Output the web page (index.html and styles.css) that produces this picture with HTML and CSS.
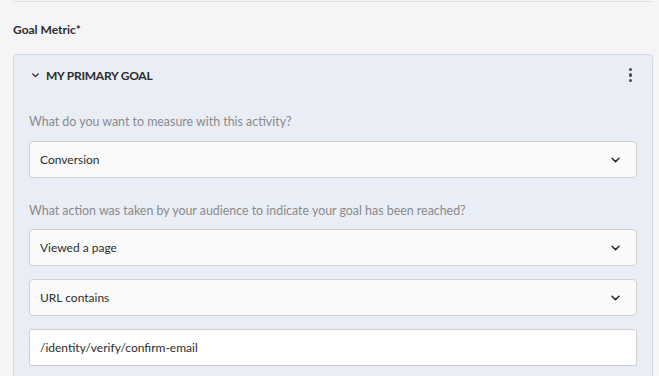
FILE: index.html
```html
<!DOCTYPE html>
<html lang="en">
<head>
<meta charset="utf-8">
<title>Goal Metric</title>
<link rel="stylesheet" href="styles.css">
</head>
<body>
<div class="page">
  <div class="divider"></div>
  <div class="field-label">Goal Metric*</div>
  <section class="goal-card">
    <header class="goal-head">
      <svg class="head-chevron" width="7" height="5" viewBox="0 0 7 5"><path d="M0.8 1 L3.5 3.6 L6.2 1" fill="none" stroke="#2c2c2c" stroke-width="1.3" stroke-linecap="round" stroke-linejoin="round"/></svg>
      <span class="goal-title">MY PRIMARY GOAL</span>
      <span class="kebab"><i></i><i></i><i></i></span>
    </header>
    <div class="goal-body">
      <div class="question">What do you want to measure with this activity?</div>
      <div class="select">
        <span>Conversion</span>
        <svg class="chev" width="9" height="6" viewBox="0 0 9 6"><path d="M1 1.2 L4.5 4.6 L8 1.2" fill="none" stroke="#2c2c2c" stroke-width="1.5" stroke-linecap="round" stroke-linejoin="round"/></svg>
      </div>
      <div class="question q2">What action was taken by your audience to indicate your goal has been reached?</div>
      <div class="controls">
        <div class="select">
          <span>Viewed a page</span>
          <svg class="chev" width="9" height="6" viewBox="0 0 9 6"><path d="M1 1.2 L4.5 4.6 L8 1.2" fill="none" stroke="#2c2c2c" stroke-width="1.5" stroke-linecap="round" stroke-linejoin="round"/></svg>
        </div>
        <div class="select">
          <span>URL contains</span>
          <svg class="chev" width="9" height="6" viewBox="0 0 9 6"><path d="M1 1.2 L4.5 4.6 L8 1.2" fill="none" stroke="#2c2c2c" stroke-width="1.5" stroke-linecap="round" stroke-linejoin="round"/></svg>
        </div>
        <div class="text-input">/identity/verify/confirm-email</div>
      </div>
    </div>
  </section>
</div>
</body>
</html>
```

FILE: styles.css
```css
html, body {
  margin: 0;
  padding: 0;
  background: #f5f5f5;
  height: 100%;
  overflow: hidden;
}
body {
  font-family: "Lato", "Noto Sans", sans-serif;
  color: #2c2c2c;
}
.page {
  margin: 0 6px 0 13px;
}
.divider {
  margin-top: 1px;
  height: 1px;
  background: #e1e1e1;
}
.field-label {
  margin-top: 20px;
  font-size: 12px;
  line-height: 16px;
  font-weight: 700;
}
.goal-card {
  margin-top: 16px;
  background: #e9edf5;
  border: 1px solid #d2dae6;
  border-radius: 4px;
  height: 400px;
}
.goal-head {
  display: flex;
  align-items: center;
  height: 40px;
  padding: 0 19px 0 18px;
}
.head-chevron {
  margin-right: 7px;
}
.goal-title {
  font-size: 12px;
  letter-spacing: -0.25px;
  font-weight: 700;
  flex: 1;
}
.kebab {
  display: flex;
  flex-direction: column;
  gap: 2px;
  margin-right: 1px;
}
.kebab i {
  width: 3.5px;
  height: 3.5px;
  border-radius: 50%;
  background: #4b4b4b;
}
.goal-body {
  padding: 18px 15px 0 15px;
}
.question {
  font-size: 12.4px;
  line-height: 18px;
  color: #8a8a8a;
  margin-bottom: 10px;
}
.q2 {
  margin-top: 24px;
  margin-bottom: 9px;
}
.controls {
  display: flex;
  flex-direction: column;
  gap: 13px;
}
.select, .text-input {
  box-sizing: border-box;
  height: 37px;
  border: 1px solid #d0d0d0;
  border-radius: 4px;
  background: #fafafa;
  display: flex;
  align-items: center;
  padding: 0 16px 0 10px;
  font-size: 12px;
}
.select span {
  flex: 1;
}
.text-input {
  background: #ffffff;
  border-radius: 2px;
}
```
